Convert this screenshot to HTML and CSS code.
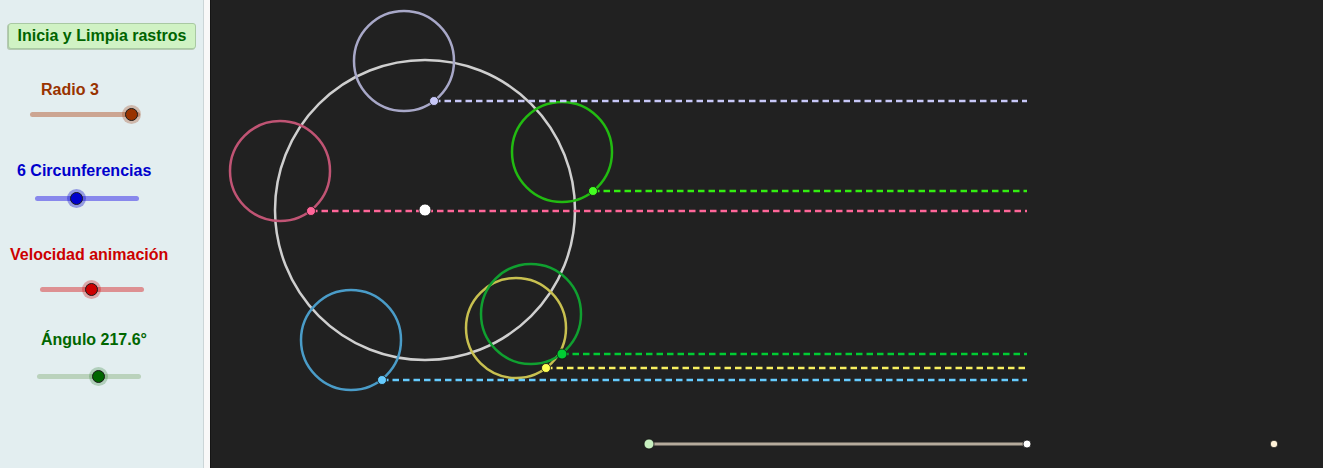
FILE: index.html
```html
<!DOCTYPE html>
<html lang="es">
<head>
<meta charset="utf-8">
<title>Circunferencias</title>
<link rel="stylesheet" href="styles.css">
</head>
<body>
<div class="app">
  <aside class="panel">
    <button class="btn">Inicia y Limpia rastros</button>

    <div class="label l-radio">Radio 3</div>
    <div class="slider s-radio"><span class="track"></span><span class="thumb" style="left:96px"></span></div>

    <div class="label l-circ">6 Circunferencias</div>
    <div class="slider s-circ"><span class="track"></span><span class="thumb" style="left:36px"></span></div>

    <div class="label l-vel">Velocidad animación</div>
    <div class="slider s-vel"><span class="track"></span><span class="thumb" style="left:46px"></span></div>

    <div class="label l-ang">Ángulo 217.6°</div>
    <div class="slider s-ang"><span class="track"></span><span class="thumb" style="left:56px"></span></div>
  </aside>
  <div class="divider"></div>
  <main class="canvas">
    <svg class="graph" width="1112" height="468" viewBox="211 0 1112 468" xmlns="http://www.w3.org/2000/svg">
      <g fill="none" stroke-width="2.5">
        <circle cx="425" cy="210" r="150" stroke="#cfcfcf"/>
        <circle cx="404" cy="61" r="50" stroke="#a8a8c8"/>
        <circle cx="562" cy="152" r="50" stroke="#22bb11"/>
        <circle cx="280" cy="171" r="50" stroke="#c05474"/>
        <circle cx="351" cy="340" r="50" stroke="#4a9cc8"/>
        <circle cx="516" cy="328" r="50" stroke="#c8c050"/>
        <circle cx="531" cy="314" r="50" stroke="#10a030"/>
      </g>
      <g fill="none" stroke-width="2.5" stroke-dasharray="6.5 4">
        <line x1="434" y1="101" x2="1027" y2="101" stroke="#c8c8f8"/>
        <line x1="593" y1="191" x2="1027" y2="191" stroke="#33ee11"/>
        <line x1="311" y1="211" x2="1027" y2="211" stroke="#ff6699"/>
        <line x1="562" y1="354" x2="1027" y2="354" stroke="#00cc33"/>
        <line x1="546" y1="368" x2="1027" y2="368" stroke="#f8f060"/>
        <line x1="382" y1="380" x2="1027" y2="380" stroke="#66ccff"/>
      </g>
      <line x1="649" y1="444" x2="1027" y2="444" stroke="#b5ab9c" stroke-width="3"/>
      <g stroke="#111" stroke-width="0.8">
        <circle cx="434" cy="101" r="4.5" fill="#c8c8f8"/>
        <circle cx="593" cy="191" r="4.5" fill="#44ff22"/>
        <circle cx="311" cy="211" r="4.5" fill="#ff6699"/>
        <circle cx="425" cy="210" r="6" fill="#ffffff"/>
        <circle cx="562" cy="354" r="5" fill="#00cc33"/>
        <circle cx="546" cy="368" r="4.5" fill="#ffff55"/>
        <circle cx="382" cy="380" r="4.5" fill="#66ccff"/>
        <circle cx="649" cy="444" r="5" fill="#c8f0c0"/>
        <circle cx="1027" cy="444" r="4" fill="#ffffff"/>
        <circle cx="1274" cy="444" r="3.8" fill="#fff2d8"/>
      </g>
    </svg>
  </main>
</div>
</body>
</html>
```

FILE: styles.css
```css
html, body {
  margin: 0;
  padding: 0;
  height: 468px;
  overflow: hidden;
  background: #212121;
}

.app {
  display: flex;
  height: 468px;
  font-family: "Liberation Sans", Arial, sans-serif;
}

.panel {
  width: 203px;
  flex: none;
  background: #e3eef0;
  border-right: 1px solid #cbd5d7;
  display: flex;
  flex-direction: column;
  align-items: flex-start;
}

.divider {
  width: 6px;
  flex: none;
  background: #f8f8f8;
}

.canvas {
  flex: 1;
  background: #212121;
  border-left: 1px solid #151515;
  overflow: hidden;
}

.graph {
  display: block;
}

.btn {
  margin: 23px 0 0 8px;
  width: 188px;
  height: 26px;
  padding: 0;
  background: #d0f2c4;
  border: 1px solid #a9c9a3;
  border-radius: 3px;
  box-shadow: -1px 1px 0 #b5c9b2;
  color: #006400;
  font-family: "Liberation Sans", Arial, sans-serif;
  font-weight: bold;
  font-size: 16px;
  line-height: 24px;
  text-align: center;
}

.label {
  font-weight: bold;
  font-size: 16px;
  line-height: 18px;
  height: 18px;
  white-space: nowrap;
}

.l-radio { margin: 32px 0 0 41px; color: #993300; }
.l-circ  { margin: 39px 0 0 17px; color: #0000cc; }
.l-vel   { margin: 39px 0 0 10px; color: #cc0000; }
.l-ang   { margin: 33px 0 0 41px; color: #006600; }

.slider {
  position: relative;
  height: 18px;
  width: 110px;
}

.track {
  position: absolute;
  left: 0;
  right: 0;
  top: 7px;
  height: 5px;
  border-radius: 3px;
}

.thumb {
  position: absolute;
  top: 3px;
  width: 11px;
  height: 11px;
  margin-left: -1px;
  border-radius: 50%;
  border: 1px solid #1a1a1a;
}

.s-radio { margin: 6px 0 0 30px; width: 110px; }
.s-radio .track { background: #cca592; }
.s-radio .thumb { background: #993300; box-shadow: 0 0 0 3px rgba(153, 51, 0, 0.28); }

.s-circ { margin: 9px 0 0 35px; width: 104px; }
.s-circ .track { background: #8888ec; }
.s-circ .thumb { background: #0000cc; box-shadow: 0 0 0 3px rgba(0, 0, 204, 0.35); }

.s-vel { margin: 16px 0 0 40px; width: 104px; }
.s-vel .track { background: #dd9092; }
.s-vel .thumb { background: #cc0000; box-shadow: 0 0 0 3px rgba(204, 0, 0, 0.3); }

.s-ang { margin: 18px 0 0 37px; width: 104px; }
.s-ang .track { background: #bad2bc; }
.s-ang .thumb { background: #006600; box-shadow: 0 0 0 3px rgba(0, 102, 0, 0.22); }
```
